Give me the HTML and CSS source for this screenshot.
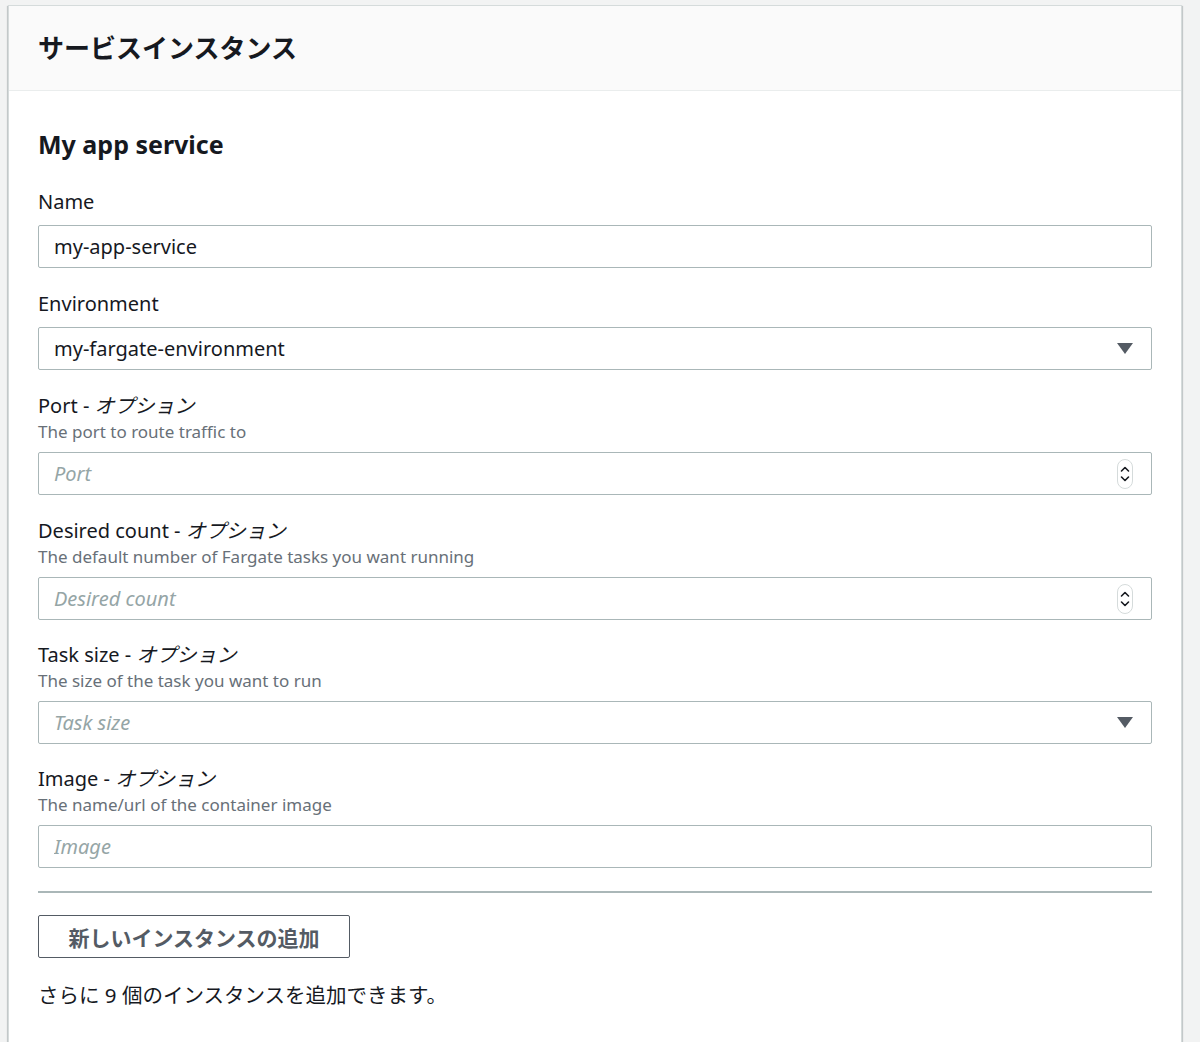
FILE: index.html
```html
<!DOCTYPE html>
<html lang="ja">
	<head>
		<meta charset="UTF-8">
		<title>サービスインスタンス</title>
		<link rel="stylesheet" href="styles.css">
	</head>
	<body>
		<div class="card">
			<div class="card-header">
				<h2>サービスインスタンス</h2>
			</div>
			<div class="card-body">
				<h3>My app service</h3>

				<div class="field">
					<label class="label">Name</label>
					<div class="control">
						<input class="input" type="text" value="my-app-service">
					</div>
				</div>

				<div class="field">
					<label class="label">Environment</label>
					<div class="control">
						<div class="input select">my-fargate-environment</div>
						<svg class="caret" width="16" height="11" viewBox="0 0 16 11"><path d="M0 0h16L8 11z" fill="#545b64"/></svg>
					</div>
				</div>

				<div class="field">
					<label class="label">Port <span class="opt">- <i>オプション</i></span></label>
					<div class="desc">The port to route traffic to</div>
					<div class="control">
						<input class="input" type="text" placeholder="Port">
						<svg class="spin" width="16" height="30" viewBox="0 0 16 30"><rect x="0.5" y="0.5" width="15" height="29" rx="7.5" fill="#fff" stroke="#d5dbdb"/><path d="M4.5 12l3.5-3.5 3.5 3.5M4.5 18l3.5 3.5 3.5-3.5" fill="none" stroke="#16191f" stroke-width="1.6" stroke-linecap="round" stroke-linejoin="round"/></svg>
					</div>
				</div>

				<div class="field">
					<label class="label">Desired count <span class="opt">- <i>オプション</i></span></label>
					<div class="desc">The default number of Fargate tasks you want running</div>
					<div class="control">
						<input class="input" type="text" placeholder="Desired count">
						<svg class="spin" width="16" height="30" viewBox="0 0 16 30"><rect x="0.5" y="0.5" width="15" height="29" rx="7.5" fill="#fff" stroke="#d5dbdb"/><path d="M4.5 12l3.5-3.5 3.5 3.5M4.5 18l3.5 3.5 3.5-3.5" fill="none" stroke="#16191f" stroke-width="1.6" stroke-linecap="round" stroke-linejoin="round"/></svg>
					</div>
				</div>

				<div class="field">
					<label class="label">Task size <span class="opt">- <i>オプション</i></span></label>
					<div class="desc">The size of the task you want to run</div>
					<div class="control">
						<div class="input select placeholder">Task size</div>
						<svg class="caret" width="16" height="11" viewBox="0 0 16 11"><path d="M0 0h16L8 11z" fill="#545b64"/></svg>
					</div>
				</div>

				<div class="field">
					<label class="label">Image <span class="opt">- <i>オプション</i></span></label>
					<div class="desc">The name/url of the container image</div>
					<div class="control">
						<input class="input" type="text" placeholder="Image">
					</div>
				</div>

				<hr class="divider">

				<button class="btn" type="button">新しいインスタンスの追加</button>

				<p class="note">さらに 9 個のインスタンスを追加できます。</p>
			</div>
		</div>
	</body>
</html>
```

FILE: styles.css
```css
*{
	margin: 0;
	padding: 0;
	box-sizing: border-box;
}
html{
	height: 100%;
}
body{
	height: 100%;
	overflow: hidden;
	padding: 5px 18px 0 8px;
	background-color: #f2f3f3;
	font-family: "Noto Sans", "Noto Sans CJK JP", sans-serif;
	color: #16191f;
}
.card{
	background-color: #fff;
	border: 1px solid #d5dbdb;
	box-shadow: 0 1px 1px 0 rgba(0, 28, 36, .3), 1px 1px 1px 0 rgba(0, 28, 36, .15), -1px 1px 1px 0 rgba(0, 28, 36, .15);
}
/*ヘッダー*/
.card-header{
	background-color: #fafafa;
	border-bottom: 1px solid #eaeded;
	padding: 26px 29px 26px;
}
.card-header h2{
	font-size: 26px;
	line-height: 32px;
	font-weight: 700;
}
.card-body{
	padding: 37px 29px 35px;
}
.card-body h3{
	font-size: 25px;
	line-height: 32px;
	font-weight: 700;
	margin-bottom: 29px;
}
/*フォーム*/
.field{
	margin-bottom: 23px;
}
.field:nth-of-type(n+5){
	margin-top: -1px;
}
.label{
	display: block;
	font-size: 20px;
	line-height: 26px;
}
.opt i{
	font-style: italic;
}
.desc{
	font-size: 17px;
	line-height: 23px;
	color: #687078;
	margin-top: 1px;
	margin-bottom: -1px;
}
.control{
	position: relative;
	margin-top: 10px;
}
.input{
	display: block;
	width: 100%;
	height: 43px;
	padding: 0 15px;
	border: 1px solid #aab7b8;
	border-radius: 2px;
	background-color: #fff;
	font-family: inherit;
	font-size: 20px;
	line-height: 41px;
	color: #16191f;
	outline: none;
}
.input::placeholder,
.placeholder{
	color: #95a5a6;
	font-style: italic;
}
.caret{
	position: absolute;
	top: 16px;
	right: 19px;
}
.spin{
	position: absolute;
	top: 7px;
	right: 19px;
}
.divider{
	border: none;
	border-top: 2px solid #aab7b8;
	margin: 21px 0 22px;
}
.btn{
	display: block;
	width: 312px;
	height: 43px;
	border: 1px solid #545b64;
	border-radius: 2px;
	background-color: #fff;
	font-family: inherit;
	font-size: 21px;
	font-weight: 700;
	color: #545b64;
}
.note{
	margin-top: 24px;
	font-size: 20.5px;
	line-height: 26px;
}
```
